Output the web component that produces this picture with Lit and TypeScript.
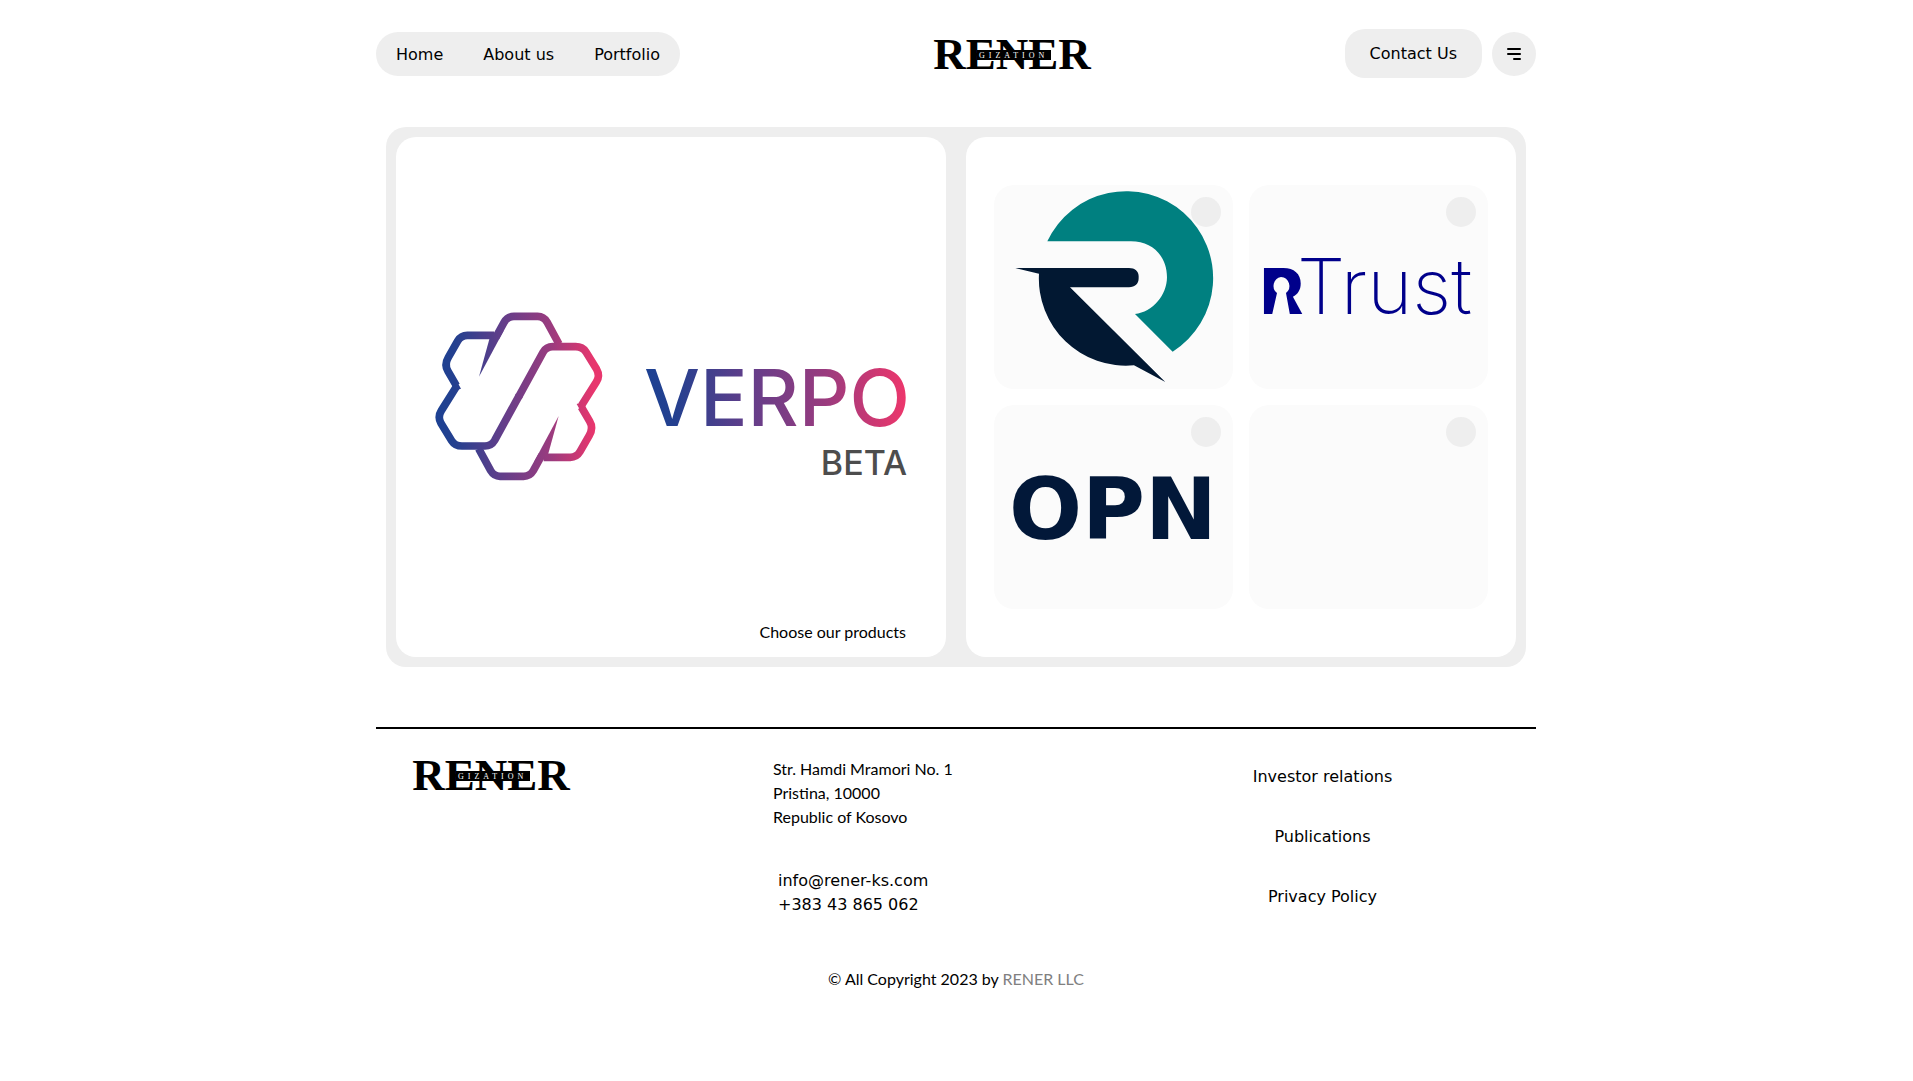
import { LitElement, html, css, svg } from "lit";
import { customElement } from "lit/decorators.js";

const NAV = ["Home", "About us", "Portfolio"];
const FOOTER_LINKS = ["Investor relations", "Publications", "Privacy Policy"];

@customElement("rener-logo")
class RenerLogo extends LitElement {
  static styles = css`
    :host {
      display: block;
      flex: none;
    }
    .mark {
      display: block;
      width: 158px;
      height: 36px;
      overflow: visible;
    }
    .name {
      font: 700 45px "Liberation Serif", serif;
    }
    .sub {
      font: 400 8px "Liberation Serif", serif;
      letter-spacing: 4px;
      fill: #fff;
    }
  `;
  render() {
    return html`<svg class="mark" viewBox="0 0 158 36" role="img" aria-label="RENER">
      <text class="name" x="79" y="33" text-anchor="middle">RENER</text>
      <rect x="44" y="14" width="74" height="10" />
      <text class="sub" x="46" y="22">GIZATION</text>
    </svg>`;
  }
}

@customElement("verpo-logo")
class VerpoLogo extends LitElement {
  static styles = css`
    :host {
      display: block;
    }
    .mark {
      display: block;
      width: 100%;
    }
    .name {
      font: 500 79px Inter, sans-serif;
    }
    .beta {
      font: 500 34px Inter, sans-serif;
      fill: #4d4d4d;
    }
  `;
  render() {
    const half = (turn: string) => svg`
      <g transform=${turn}>
        <g fill="none" stroke="#fff" stroke-width="23">
          <path d="M207 106 H127 Q108 106 98 123 L70 172 Q57 194 69 214 L94 257" />
          <path d="M93 262 L49 332 Q37 351 48 370 L80 422 Q90 438 111 438 H180 Q199 438 209 421 L283 286" />
          <path d="M212 113 L238 66 Q248 49 267 49 H338 Q356 49 366 66 L402 132" />
        </g>
        <path fill="#fff" d="M162 230 L194 114 L212 96 L236 92 Z" />
        <path fill="#fff" d="M94 241 L108 266 Q98 267 92 276 L84 262 Z" />
      </g>`;
    return html`<svg class="mark" viewBox="0 0 550 483" role="img" aria-label="VERPO BETA">
      <defs>
        <linearGradient id="icon" gradientUnits="userSpaceOnUse" x1="30" y1="0" x2="532" y2="0">
          <stop offset="0" stop-color="#1c4193" />
          <stop offset="0.12" stop-color="#24408f" />
          <stop offset="0.4" stop-color="#623e8a" />
          <stop offset="0.7" stop-color="#9c3b7e" />
          <stop offset="0.95" stop-color="#e8366d" />
          <stop offset="1" stop-color="#e8366d" />
        </linearGradient>
        <linearGradient id="word" gradientUnits="userSpaceOnUse" x1="247" y1="0" x2="511" y2="0">
          <stop offset="0" stop-color="#1c4193" />
          <stop offset="0.12" stop-color="#24408f" />
          <stop offset="0.4" stop-color="#623e8a" />
          <stop offset="0.7" stop-color="#9c3b7e" />
          <stop offset="1" stop-color="#ee366b" />
        </linearGradient>
        <mask id="lines" maskUnits="userSpaceOnUse" x="0" y="0" width="570" height="570">
          ${half("rotate(0)")} ${half("rotate(180 281.5 289)")}
        </mask>
      </defs>
      <g transform="translate(29 163) scale(0.3333)">
        <rect width="570" height="570" fill="url(#icon)" mask="url(#lines)" />
      </g>
      <text class="name" x="514" y="289" text-anchor="end" fill="url(#word)">VERPO</text>
      <text class="beta" x="511" y="338" text-anchor="end">BETA</text>
    </svg>`;
  }
}

@customElement("product-grid")
class ProductGrid extends LitElement {
  static styles = css`
    :host {
      display: grid;
      grid-template-columns: 1fr 1fr;
      gap: 16px;
    }
    .tile {
      display: block;
      width: 100%;
      border-radius: 20px;
      background: #fbfbfb;
    }
    .dot {
      fill: #eee;
    }
    .trust {
      font: 200 77px Inter, sans-serif;
      fill: #00008b;
    }
    .key {
      font: 900 63px Inter, sans-serif;
      fill: #00008b;
    }
    .opn {
      font: 700 86px "DejaVu Sans", sans-serif;
      fill: #021839;
    }
  `;
  render() {
    const dot = svg`<circle class="dot" cx="212" cy="27" r="15" />`;
    return html`
      <svg class="tile" viewBox="0 0 239 204" role="img" aria-label="R">
        ${dot}
        <g transform="scale(0.3333) translate(-13 -14)">
          <path
            fill="#008080"
            d="M173 183 H424 C490 183 532 229 532 291 C532 344 489 396 436 401 L549 514 A261 261 0 1 0 173 183 Z"
          />
          <path
            fill="#021832"
            d="M77 263 H418 C436 263 447 273 447 287 V294 C447 310 436 321 418 321 H241 L527 605 L433 555 A261 261 0 0 1 148 280 Z"
          />
        </g>
      </svg>
      <svg class="tile" viewBox="0 0 239 204" role="img" aria-label="RTrust">
        ${dot}
        <text class="key" x="12" y="129">R</text>
        <circle cx="32" cy="101" r="12" fill="#00008b" />
        <path d="M32 92 a9 9 0 0 1 5 16 L41 130 H23 L28 108 a9 9 0 0 1 4 -16Z" fill="#fbfbfb" />
        <text class="trust" x="48" y="129">Trust</text>
      </svg>
      <svg class="tile" viewBox="0 0 239 204" role="img" aria-label="OPN">
        ${dot}
        <text class="opn" x="119" y="134" text-anchor="middle">OPN</text>
      </svg>
      <svg class="tile" viewBox="0 0 239 204" aria-hidden="true">${dot}</svg>
    `;
  }
}

@customElement("app-root")
class AppRoot extends LitElement {
  static styles = css`
    :host {
      display: block;
      padding-right: 1px;
      background: #fff;
      color: #000;
      font: 16px/24px Lato, sans-serif;
    }
    .page {
      max-width: 1160px;
      margin: 0 auto;
    }
    a,
    button {
      font: 16px/24px "DejaVu Sans", sans-serif;
      color: inherit;
      text-decoration: none;
    }
    .header {
      display: flex;
      align-items: center;
      justify-content: space-between;
      padding: 29px 0 49px;
    }
    .nav {
      display: flex;
      gap: 40px;
      padding: 11px 20px 9px;
      border-radius: 22px;
      background: #eee;
    }
    .actions {
      display: flex;
      align-items: center;
      gap: 10px;
    }
    .contact {
      padding: 12px 25px;
      line-height: 25px;
      border-radius: 20px;
      background: #eee;
    }
    .menu {
      display: grid;
      place-items: center;
      width: 44px;
      height: 44px;
      padding: 0;
      border: 0;
      border-radius: 50%;
      background: #eee;
    }
    .panel {
      display: grid;
      grid-template-columns: 1fr 1fr;
      gap: 20px;
      margin: 0 10px;
      padding: 10px;
      border-radius: 20px;
      background: #eee;
    }
    .card {
      border-radius: 20px;
      background: #fff;
    }
    .choose {
      margin: 0;
      padding: 0 40px 13px;
      text-align: right;
    }
    .products {
      padding: 48px 28px;
    }
    .footer {
      margin-top: 60px;
      border-top: 2px solid #000;
    }
    .columns {
      display: grid;
      grid-template-columns: 361fr 336fr 427fr;
      padding: 28px 0 0 36px;
    }
    .address {
      font-style: normal;
    }
    .reach {
      display: flex;
      flex-direction: column;
      align-items: flex-start;
      padding: 40px 0 0 5px;
    }
    .links {
      display: flex;
      flex-direction: column;
      align-items: center;
      gap: 36px;
      padding-top: 8px;
    }
    .copy {
      margin: 0;
      padding: 50px 0 24px;
      text-align: center;
    }
    .owner {
      color: #808080;
    }
  `;
  render() {
    return html`<div class="page">
      <header class="header">
        <nav class="nav">${NAV.map((t) => html`<a href="#">${t}</a>`)}</nav>
        <rener-logo></rener-logo>
        <div class="actions">
          <a class="contact" href="#">Contact Us</a>
          <button class="menu" aria-label="Menu">
            <svg width="14" height="12" viewBox="0 0 14 12">
              <rect width="14" height="2" rx="1" />
              <rect y="5" width="14" height="2" rx="1" />
              <rect x="6" y="10" width="8" height="2" rx="1" />
            </svg>
          </button>
        </div>
      </header>
      <main class="panel">
        <section class="card">
          <verpo-logo></verpo-logo>
          <p class="choose">Choose our products</p>
        </section>
        <section class="card products"><product-grid></product-grid></section>
      </main>
      <footer class="footer">
        <div class="columns">
          <rener-logo></rener-logo>
          <div>
            <address class="address">
              Str. Hamdi Mramori No. 1<br />Pristina, 10000<br />Republic of Kosovo
            </address>
            <div class="reach">
              <a href="mailto:info@rener-ks.com">info@rener-ks.com</a>
              <a href="tel:+38343865062">+383 43 865 062</a>
            </div>
          </div>
          <nav class="links">${FOOTER_LINKS.map((t) => html`<a href="#">${t}</a>`)}</nav>
        </div>
        <p class="copy">© All Copyright 2023 by <span class="owner">RENER LLC</span></p>
      </footer>
    </div>`;
  }
}
